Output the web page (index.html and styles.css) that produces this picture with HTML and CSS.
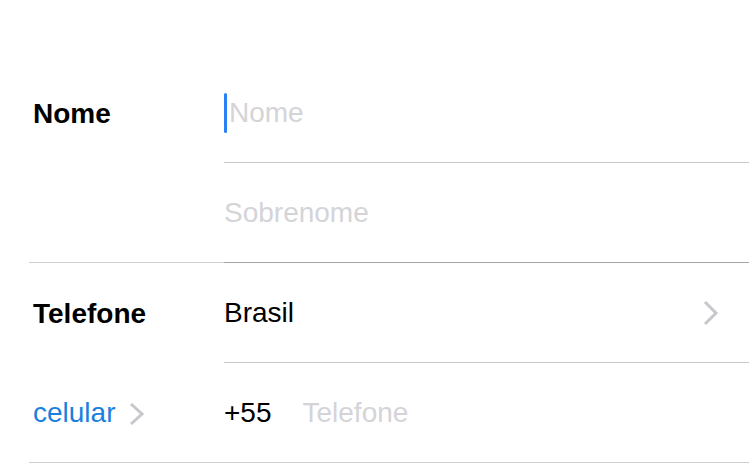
FILE: index.html
```html
<!DOCTYPE html>
<html>
	<head>
		<title>Novo contato</title>
		<meta charset="utf-8">
		<link rel="stylesheet" href="styles.css">
	</head>

	<body>
		<div class="form">
			<!--Nome e sobrenome-->
			<div class="group">
				<div class="label top"><span class="title">Nome</span></div>
				<div class="fields">
					<div class="field"><span class="caret"></span><span class="placeholder">Nome</span></div>
					<div class="field last"><span class="placeholder">Sobrenome</span></div>
				</div>
			</div>

			<!--Telefone-->
			<div class="group">
				<div class="label top open"><span class="title">Telefone</span></div>
				<div class="fields">
					<div class="field country">
						<span class="value">Brasil</span>
						<svg class="chevron" width="16" height="26" viewBox="0 0 16 26"><path d="M2 2 L13 13 L2 24" /></svg>
					</div>
				</div>
			</div>
			<div class="group">
				<div class="label">
					<span class="kind">celular</span>
					<svg class="chevron small" width="16" height="24" viewBox="0 0 16 24"><path d="M2 2 L13 12 L2 22" /></svg>
				</div>
				<div class="fields">
					<div class="field plain">
						<span class="value">+55</span>
						<span class="placeholder phone">Telefone</span>
					</div>
				</div>
			</div>
		</div>
	</body>
</html>
```

FILE: styles.css
```css
* {
	box-sizing: border-box;
}

body {
	margin: 0;
	background: #fff;
	font-family: "Liberation Sans", Arial, sans-serif;
	font-size: 28px;
	color: #000;
}

.form {
	padding-top: 63px;
}

.group {
	display: flex;
	margin-left: 29px;
}

.label {
	width: 195px;
	flex-shrink: 0;
	padding-left: 4px;
	display: flex;
	align-items: center;
	border-bottom: 1px solid #cfcfd3;
}

.label.top {
	align-items: flex-start;
	padding-top: 35px;
}

.label.open {
	border-bottom-color: transparent;
}

.title {
	font-weight: bold;
}

.kind {
	color: #1b7fe0;
}

.fields {
	flex: 1;
	display: flex;
	flex-direction: column;
}

.field {
	height: 100px;
	display: flex;
	align-items: center;
	border-bottom: 1px solid #c8c7cc;
}

.field.last {
	border-bottom-color: #a4a4a8;
}

.field.country {
	justify-content: space-between;
	padding-right: 30px;
}

.field.plain {
	border-bottom-color: #cfcfd3;
}

.placeholder {
	color: #d4d4d8;
}

.phone {
	margin-left: 31px;
}

.caret {
	width: 3px;
	height: 40px;
	margin-right: 2px;
	border-radius: 2px;
	background: #2a80f5;
}

.chevron path {
	fill: none;
	stroke: #c7c7cc;
	stroke-width: 3;
}

.chevron.small {
	margin-left: 14px;
	margin-top: 2px;
}
```
